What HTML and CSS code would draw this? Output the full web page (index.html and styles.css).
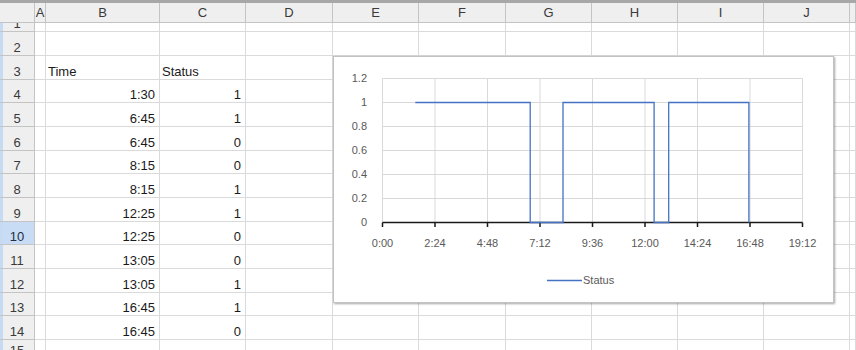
FILE: index.html
```html
<!DOCTYPE html>
<html lang="en">
<head>
  <meta charset="UTF-8">
  <title>Status Chart</title>
  <link rel="stylesheet" href="styles.css">
</head>
<body>

  <div class="page">
    <div class="sheet" id="sheet"></div>

    <div class="chart">
      <svg width="501" height="247" viewBox="0 0 501 247">
        <!-- gridlines -->
        <g class="grid">
          <line x1="49.5" y1="22.5" x2="469.5" y2="22.5"/>
          <line x1="49.5" y1="46.5" x2="469.5" y2="46.5"/>
          <line x1="49.5" y1="70.5" x2="469.5" y2="70.5"/>
          <line x1="49.5" y1="94.5" x2="469.5" y2="94.5"/>
          <line x1="49.5" y1="118.5" x2="469.5" y2="118.5"/>
          <line x1="49.5" y1="142.5" x2="469.5" y2="142.5"/>
          <line x1="49.5" y1="22.5" x2="49.5" y2="166.5"/>
          <line x1="102" y1="22.5" x2="102" y2="166.5"/>
          <line x1="154.5" y1="22.5" x2="154.5" y2="166.5"/>
          <line x1="207" y1="22.5" x2="207" y2="166.5"/>
          <line x1="259.5" y1="22.5" x2="259.5" y2="166.5"/>
          <line x1="312" y1="22.5" x2="312" y2="166.5"/>
          <line x1="364.5" y1="22.5" x2="364.5" y2="166.5"/>
          <line x1="417" y1="22.5" x2="417" y2="166.5"/>
          <line x1="469.5" y1="22.5" x2="469.5" y2="166.5"/>
        </g>

        <!-- x axis with ticks -->
        <g class="axis">
          <line x1="49.5" y1="166.5" x2="469.5" y2="166.5"/>
          <line x1="49.5" y1="166.5" x2="49.5" y2="171"/>
          <line x1="102" y1="166.5" x2="102" y2="171"/>
          <line x1="154.5" y1="166.5" x2="154.5" y2="171"/>
          <line x1="207" y1="166.5" x2="207" y2="171"/>
          <line x1="259.5" y1="166.5" x2="259.5" y2="171"/>
          <line x1="312" y1="166.5" x2="312" y2="171"/>
          <line x1="364.5" y1="166.5" x2="364.5" y2="171"/>
          <line x1="417" y1="166.5" x2="417" y2="171"/>
          <line x1="469.5" y1="166.5" x2="469.5" y2="171"/>
        </g>

        <!-- status series -->
        <polyline class="series" points="82.3,46.5 197.2,46.5 197.2,166.5 230,166.5 230,46.5 321.1,46.5 321.1,166.5 335.7,166.5 335.7,46.5 415.9,46.5 415.9,166.5"/>

        <g class="ylabels">
          <text x="34" y="26">1.2</text>
          <text x="34" y="50">1</text>
          <text x="34" y="74">0.8</text>
          <text x="34" y="98">0.6</text>
          <text x="34" y="122">0.4</text>
          <text x="34" y="146">0.2</text>
          <text x="34" y="170">0</text>
        </g>

        <g class="xlabels">
          <text x="49.5" y="191">0:00</text>
          <text x="102" y="191">2:24</text>
          <text x="154.5" y="191">4:48</text>
          <text x="207" y="191">7:12</text>
          <text x="259.5" y="191">9:36</text>
          <text x="312" y="191">12:00</text>
          <text x="364.5" y="191">14:24</text>
          <text x="417" y="191">16:48</text>
          <text x="469.5" y="191">19:12</text>
        </g>

        <!-- legend -->
        <line class="series" x1="214" y1="224.5" x2="249" y2="224.5"/>
        <text class="legend" x="250" y="228">Status</text>
      </svg>
    </div>
  </div>

  <script>
    // Columns of the sheet, first one is the row header corner
    const columns = ['', 'A', 'B', 'C', 'D', 'E', 'F', 'G', 'H', 'I', 'J', ''];

    // Rows of data: [row number, time, status]
    const rows = [
      [1, '', ''],
      [2, '', ''],
      [3, 'Time', 'Status'],
      [4, '1:30', '1'],
      [5, '6:45', '1'],
      [6, '6:45', '0'],
      [7, '8:15', '0'],
      [8, '8:15', '1'],
      [9, '12:25', '1'],
      [10, '12:25', '0'],
      [11, '13:05', '0'],
      [12, '13:05', '1'],
      [13, '16:45', '1'],
      [14, '16:45', '0'],
      [15, '', '']
    ];

    const sheet = document.getElementById('sheet');

    function addCell(className, text) {
      const cell = document.createElement('div');
      cell.className = className;
      if (text) {
        const span = document.createElement('span');
        span.textContent = text;
        cell.appendChild(span);
      }
      sheet.appendChild(cell);
    }

    // Column headers
    columns.forEach((name, i) => {
      addCell(i === 0 ? 'head corner' : 'head col-head', name);
    });

    // Data rows
    rows.forEach(([num, time, status]) => {
      let extra = '';
      if (num === 15) extra = ' row-last';

      addCell('head row-head' + (num === 10 ? ' selected' : '') + extra, String(num));
      addCell('cell' + extra, '');

      const isLabel = num === 3;
      addCell('cell' + (isLabel ? ' text' : ' num') + extra, time);
      addCell('cell' + (isLabel ? ' text' : ' num') + extra, status);

      for (let i = 0; i < 8; i++) {
        addCell('cell' + extra, '');
      }
    });
  </script>

</body>
</html>
```

FILE: styles.css
```css
html,
body {
  margin: 0;
  height: 100%;
  overflow: hidden;
  background-color: #fff;
}

body {
  font-family: 'Liberation Sans', Arial, sans-serif;
  font-size: 13px;
  color: #1a1a1a;
}

.page {
  position: relative;
  height: 350px;
  overflow: hidden;
  border-top: 3px solid #a7a7a7;
  box-sizing: border-box;
}

.sheet {
  display: grid;
  grid-template-columns: 35px 11px 114px 86px 87px 86px 87px 86px 86px 86px 86px 1fr;
  grid-template-rows: 20px 9px 24px repeat(12, 23.67px) 10px;
}

/* cells are bottom aligned, like in the spreadsheet */
.cell,
.head {
  box-sizing: border-box;
  border-right: 1px solid #dadada;
  border-bottom: 1px solid #dadada;
  display: flex;
  align-items: flex-end;
  padding-bottom: 0;
  overflow: hidden;
  white-space: nowrap;
}

.cell span,
.head span {
  display: block;
  flex-shrink: 0;
  line-height: 15px;
}

.head {
  background-color: #efefef;
  border-color: #c4c4c4;
  color: #3a3a3a;
  justify-content: center;
}

.col-head {
  align-items: center;
}

.row-head {
  box-shadow: inset 3px 0 0 #c6daf1;
}

.row-head.selected {
  background-color: #c8ddf5;
  color: #1f2f45;
}

.corner {
  background-color: #efefef;
}

.text {
  padding-left: 2px;
}

.num {
  justify-content: flex-end;
  padding-right: 4px;
}

/* last row is cut by the window, only the top of its number shows */
.row-last {
  align-items: flex-start;
  border-bottom: 0;
}

.row-last span {
  margin-top: 3px;
}

/* chart floating over the sheet */
.chart {
  position: absolute;
  left: 333px;
  top: 53px;
  width: 501px;
  height: 247px;
  background-color: #fff;
  border: 1px solid #c2c2c2;
  box-shadow: 1px 1px 2px rgba(0, 0, 0, 0.35);
  box-sizing: border-box;
}

.chart svg {
  display: block;
  margin: -1px 0 0 -1px;
}

.grid line {
  stroke: #d9d9d9;
  stroke-width: 1;
}

.axis line {
  stroke: #1a1a1a;
  stroke-width: 1.5;
}

.series {
  fill: none;
  stroke: #4472c4;
  stroke-width: 1.3;
}

.ylabels text,
.xlabels text,
.legend {
  font-family: 'Liberation Sans', Arial, sans-serif;
  font-size: 11px;
  fill: #595959;
}

.ylabels text {
  text-anchor: end;
}

.xlabels text {
  text-anchor: middle;
}
```
